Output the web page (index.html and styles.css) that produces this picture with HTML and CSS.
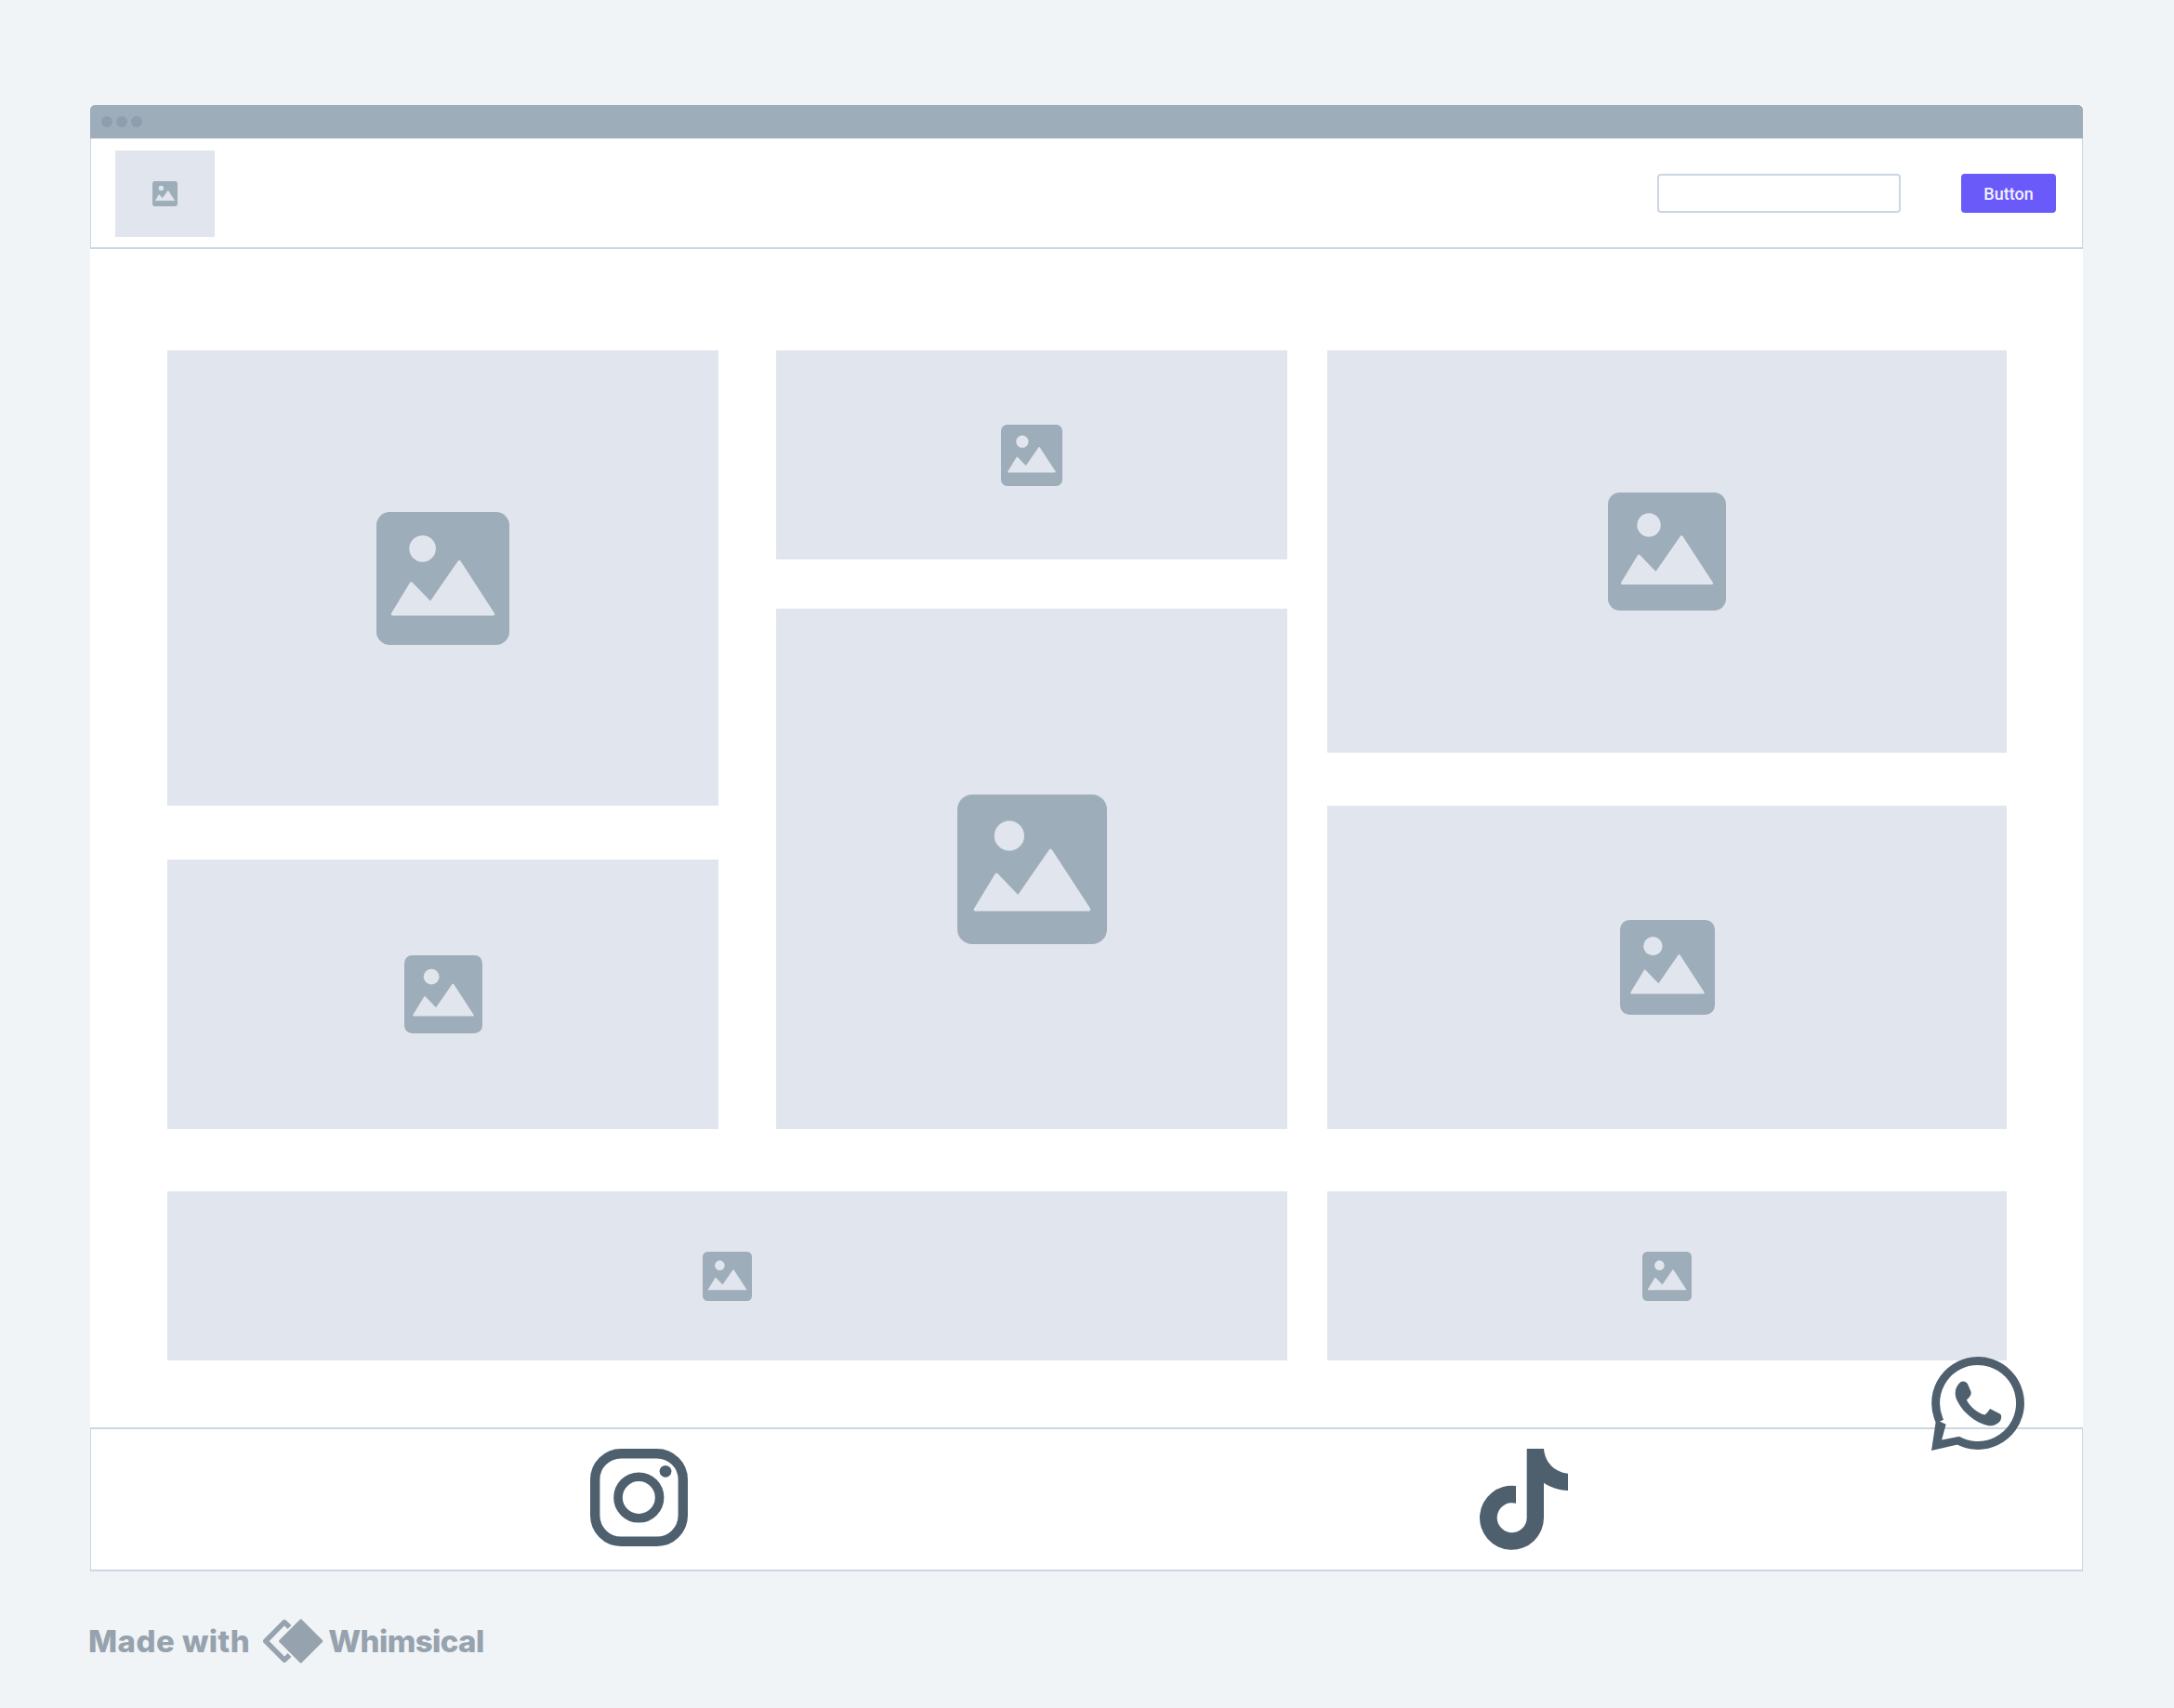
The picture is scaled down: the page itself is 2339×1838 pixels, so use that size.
FILE: index.html
```html
<!DOCTYPE html>
<html>
<head>
    <meta charset="utf-8">
    <title>Wireframe</title>
    <link rel="stylesheet" href="styles.css">
</head>
<body>
    <!-- shared placeholder picture -->
    <svg class="sprite">
        <symbol id="pic" viewBox="0 0 100 100">
            <rect width="100" height="100" rx="10" fill="#9eadba"/>
            <circle cx="34.7" cy="27.6" r="10" fill="#e1e5ed"/>
            <path d="M12.2 76.8 L26.2 53.8 L40.7 68.8 L62.3 37.6 L87.8 76.8 Z" fill="#e1e5ed" stroke="#e1e5ed" stroke-width="2.4" stroke-linejoin="round"/>
        </symbol>
    </svg>

    <div class="window">
        <div class="titlebar">
            <span class="dot"></span>
            <span class="dot"></span>
            <span class="dot"></span>
        </div>

        <div class="header">
            <div class="logo-tile">
                <svg class="pic pic-27"><use href="#pic"/></svg>
            </div>
            <div class="search"></div>
            <div class="btn">Button</div>
        </div>

        <div class="main">
            <div class="gallery">
                <div class="col col-a">
                    <div class="tile tile-490"><svg class="pic pic-143"><use href="#pic"/></svg></div>
                    <div class="tile tile-290"><svg class="pic pic-84"><use href="#pic"/></svg></div>
                </div>
                <div class="col col-b">
                    <div class="tile tile-225"><svg class="pic pic-66"><use href="#pic"/></svg></div>
                    <div class="tile tile-560"><svg class="pic pic-161"><use href="#pic"/></svg></div>
                </div>
                <div class="col col-c">
                    <div class="tile tile-433"><svg class="pic pic-127"><use href="#pic"/></svg></div>
                    <div class="tile tile-348"><svg class="pic pic-102"><use href="#pic"/></svg></div>
                </div>
            </div>
            <div class="strip">
                <div class="tile strip-wide"><svg class="pic pic-53"><use href="#pic"/></svg></div>
                <div class="tile col-c"><svg class="pic pic-53"><use href="#pic"/></svg></div>
            </div>
        </div>

        <div class="footer">
            <svg class="instagram" viewBox="0 0 105 105">
                <rect x="5.2" y="5.2" width="94.6" height="94.6" rx="28" fill="none" stroke="#4e5f6e" stroke-width="10.4"/>
                <circle cx="52.3" cy="52.5" r="22.3" fill="none" stroke="#4e5f6e" stroke-width="9.6"/>
                <circle cx="81" cy="24.3" r="6.4" fill="#4e5f6e"/>
            </svg>
            <svg class="tiktok" viewBox="0 0 95 109">
                <path d="M50.7 0 H69 C70 14 80 25 95 26.7 V45 C85 44.5 76 41.5 69 36.7 V74.3 A34.5 34.5 0 1 1 39 40.1 V58.8 A16 16 0 1 0 50.7 74.3 Z" fill="#4e5f6e"/>
            </svg>
        </div>

        <svg class="whatsapp" viewBox="0 0 100 100">
            <path d="M9 69 A45 45 0 1 1 28 89" fill="none" stroke="#4e5f6e" stroke-width="8.8"/>
            <path d="M5 67 L0 100 L28 93.5 L30 85 L11 88.5 L15.5 72 Z" fill="#4e5f6e"/>
            <path d="M31 27 C34 25.5 37 26.5 38.5 29 L42 37 C43 39.5 41.5 42.5 37.5 46 C41 53 49 60 57 62 C59 60.5 60.5 58 62.5 55.5 L73 61 C75 62 74.8 65 73.5 68 C71 71.5 66 74 61 73.5 C47 70.5 34 60 27.5 47 C24.5 41 24 33 31 27 Z" fill="#4e5f6e"/>
        </svg>
    </div>

    <div class="made-with">
        <span class="made-text">Made with</span>
        <svg class="whimsical" viewBox="0 0 66 48">
            <polyline points="29.5,9 24,3.6 3.8,24 24,44.4 29.5,39" fill="none" stroke="#96a2ad" stroke-width="5.4" stroke-linejoin="round"/>
            <polygon points="41.7,1.6 64,24 41.7,46.4 19.4,24" fill="#96a2ad" stroke="#96a2ad" stroke-width="2.6" stroke-linejoin="round"/>
        </svg>
        <span class="brand-text">Whimsical</span>
    </div>
</body>
</html>
```

FILE: styles.css
```css
body {
    margin: 0;
    padding: 113px 98px 0 97px;
    background-color: #f0f4f7;
    font-family: Inter, "Liberation Sans", sans-serif;
}
.sprite {
    display: none;
}
.pic {
    display: block;
    flex-shrink: 0;
}
.pic-27 { width: 27px; height: 27px; }
.pic-53 { width: 53px; height: 53px; }
.pic-66 { width: 66px; height: 66px; }
.pic-84 { width: 84px; height: 84px; }
.pic-102 { width: 102px; height: 102px; }
.pic-127 { width: 127px; height: 127px; }
.pic-143 { width: 143px; height: 143px; }
.pic-161 { width: 161px; height: 161px; }

.window {
    position: relative;
    width: 2144px;
    background: #fff;
}
.titlebar {
    display: flex;
    align-items: center;
    gap: 4px;
    height: 36px;
    padding-left: 12px;
    box-sizing: border-box;
    background: #9eadba;
    border-radius: 5px 5px 0 0;
}
.dot {
    width: 12px;
    height: 12px;
    border-radius: 50%;
    background: #8d9fae;
}

.header {
    display: flex;
    align-items: center;
    height: 119px;
    box-sizing: border-box;
    padding: 1px 28px 0 26px;
    border: 1px solid #cbd6e2;
    border-width: 0 1px 2px;
}
.logo-tile {
    display: flex;
    align-items: center;
    justify-content: center;
    width: 107px;
    height: 93px;
    background: #e1e5ed;
}
.search {
    width: 262px;
    height: 42px;
    box-sizing: border-box;
    margin-left: auto;
    border: 2px solid #cbd6e2;
    border-radius: 4px;
    background: #fff;
}
.btn {
    display: flex;
    align-items: center;
    justify-content: center;
    width: 102px;
    height: 42px;
    margin-left: 65px;
    border-radius: 4px;
    background: #6a5af9;
    color: #f2f1ff;
    font-family: Roboto, "Liberation Sans", sans-serif;
    font-size: 18px;
    font-weight: 500;
}

.main {
    display: flex;
    flex-direction: column;
    gap: 67px;
    padding: 109px 82px 72px 83px;
}
.gallery {
    display: flex;
    height: 838px;
}
.col {
    display: flex;
    flex-direction: column;
    justify-content: space-between;
}
.col-a { width: 593px; }
.col-b { width: 550px; margin-left: 62px; }
.col-c { width: 731px; margin-left: 43px; }
.tile {
    display: flex;
    align-items: center;
    justify-content: center;
    background: #e1e5ed;
}
.tile-225 { height: 225px; }
.tile-290 { height: 290px; }
.tile-348 { height: 348px; }
.tile-433 { height: 433px; }
.tile-490 { height: 490px; }
.tile-560 { height: 560px; }
.strip {
    display: flex;
    height: 182px;
}
.strip-wide { width: 1205px; }

.footer {
    display: flex;
    align-items: center;
    height: 155px;
    box-sizing: border-box;
    padding-left: 537px;
    border: 1px solid #cbd6e2;
    border-width: 2px 1px;
}
.instagram {
    width: 105px;
    height: 105px;
    margin-bottom: 4px;
}
.tiktok {
    width: 95px;
    height: 109px;
    margin-left: 852px;
}
.whatsapp {
    position: absolute;
    top: 1347px;
    right: 62px;
    width: 101px;
    height: 101px;
}

.made-with {
    display: flex;
    align-items: center;
    margin: 51px 0 0 -2px;
    color: #96a2ad;
    font-size: 33px;
    font-weight: 800;
}
.made-text {
    letter-spacing: 0.45px;
}
.brand-text {
    letter-spacing: -0.6px;
}
.whimsical {
    width: 66px;
    height: 48px;
    margin: 0 5px 0 13px;
}
```
